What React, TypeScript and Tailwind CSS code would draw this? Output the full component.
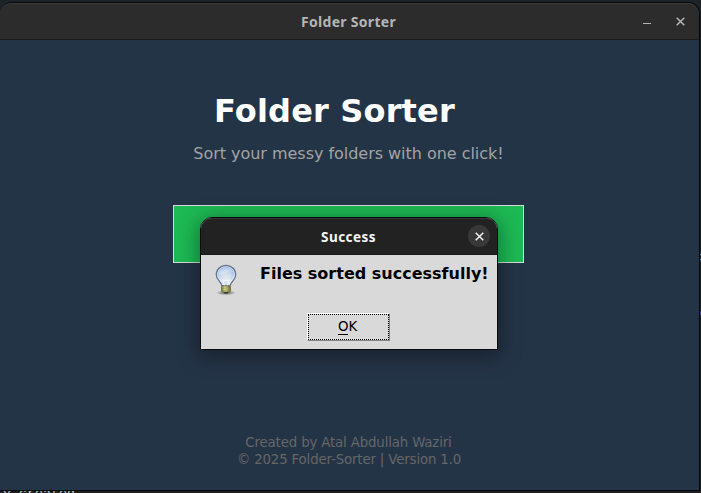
function Bulb() {
  return (
    <svg width="22" height="32" viewBox="0 0 22 32" className="block">
      <defs>
        <radialGradient id="glass" cx="50%" cy="65%" r="65%">
          <stop offset="0" stopColor="#e6ebef" />
          <stop offset="0.5" stopColor="#c8d9ec" />
          <stop offset="1" stopColor="#79a5e0" />
        </radialGradient>
        <linearGradient id="cap" x1="0" x2="1" y1="0" y2="0">
          <stop offset="0" stopColor="#7b7d2c" />
          <stop offset="0.4" stopColor="#eeefb4" />
          <stop offset="1" stopColor="#6b6d24" />
        </linearGradient>
        <radialGradient id="shade">
          <stop offset="0" stopColor="#333" stopOpacity="0.75" />
          <stop offset="1" stopColor="#333" stopOpacity="0" />
        </radialGradient>
      </defs>
      <ellipse cx="11" cy="28.8" rx="10" ry="2.6" fill="url(#shade)" />
      <path d="M7 22C6.500 18 1.300 16 1.300 10.700C1.300 5 5.600 1.500 11 1.500s9.700 3.500 9.700 9.200c0 5.300-5.200 7.300-5.700 11.300z" fill="url(#glass)" stroke="#6c7288" strokeWidth="1.300" />
      <path d="M8 21C7.500 17 2.600 15 2.600 10.700C2.600 6 6.500 2.800 11 2.800s8.400 3.200 8.400 7.900c0 4.300-4.900 6.300-5.400 10.300" fill="none" stroke="#edf4fc" strokeWidth="0.900" opacity="0.850" />
      <path d="M4 8C5 3.500 16 2 18 8C13 6 10 10 4 11z" fill="#fff" opacity="0.300" />
      <path d="M9.500 21.500L7.500 15.500l2.500 1.500 1-1.500 1 1.500 2.500-1.500-2 6" fill="none" stroke="#fafafa" strokeWidth="1" />
      <rect x="6.500" y="22" width="9" height="6" rx="1.300" fill="url(#cap)" stroke="#5e6028" strokeWidth="0.700" />
      <path d="M6.500 24.500l9-1M6.500 26.700l9-1" stroke="#7c7e3a" strokeWidth="0.700" />
      <path d="M8.500 28h5l-1 1.500h-3z" fill="#34352a" />
    </svg>
  );
}

function Cross() {
  return (
    <svg width="9" height="9" viewBox="0 0 9 9" className="block" fill="none" stroke="currentColor" strokeWidth="1.500">
      <path d="M0.700 0.700l7.600 7.600M8.300 0.700L0.700 8.300" />
    </svg>
  );
}

function Dialog() {
  return (
    <div className="absolute left-[200px] top-[217px] h-[133px] w-[298px] overflow-hidden rounded-t-[12px] border border-[#090c0f] bg-[#d9d9d9] shadow-[0_4px_20px_3px_rgba(0,0,0,0.36)]">
      <div className="relative flex h-[37px] items-center justify-center rounded-t-[11px] border-b border-[#171717] bg-[#222222] shadow-[inset_0_1px_0_#353535]">
        <span className="pt-[2px] pr-px font-['Noto_Sans',sans-serif] text-[13.500px] font-bold tracking-[0.450px] text-[#f5f5f5]">Success</span>
        <button className="absolute right-[7px] top-[7px] flex size-[22px] items-center rounded-full bg-[#383838] pl-[6.500px] text-[#f2f2f2]">
          <Cross />
        </button>
      </div>
      <div className="flex pl-[14px] pt-[9px]">
        <Bulb />
        <p className="ml-[23px] whitespace-nowrap text-[16px] leading-[19px] font-bold text-black">Files sorted successfully!</p>
      </div>
      <button className="ml-[106px] mt-[17px] flex h-[28px] w-[83px] border border-t-white border-r-[#828282] border-b-[#828282] border-l-white">
        <span className="flex h-full w-full items-center justify-center border border-dotted border-black pr-[2px] text-[13.330px] leading-[16px] tracking-[-0.200px] text-black">
          <span className="border-b border-black leading-[14px]">O</span>
          <span className="border-b border-transparent leading-[14px]">K</span>
        </span>
      </button>
    </div>
  );
}

export default function App() {
  return (
    <div className="relative h-[493px] w-[701px] overflow-hidden bg-[#1c2226] pt-[2px] font-['DejaVu_Sans',sans-serif]">
      <div className="flex h-[489px] w-[700px] flex-col overflow-hidden rounded-t-[12px] border-y border-r border-[#05080b] bg-[#243447]">
        <header className="relative flex h-[37px] shrink-0 items-center justify-center rounded-t-[11px] border-b border-[#1c1c1c] bg-[#2c2c2c] text-[#b5b5b5] shadow-[inset_0_1px_0_#3b3b3b]">
          <h2 className="pr-[2px] font-['Noto_Sans',sans-serif] text-[14px] font-bold tracking-[0.300px]">Folder Sorter</h2>
          <div className="absolute right-[14px] top-[14px] flex gap-[25px]">
            <span className="mt-[6px] h-px w-2 bg-[#b5b5b5]" />
            <Cross />
          </div>
        </header>
        <main className="flex flex-1 flex-col items-center">
          <h1 className="mr-[30px] mt-[52px] text-[32px] leading-[38px] font-bold tracking-[0.170px] text-white">Folder Sorter</h1>
          <p className="mt-[14px] mr-[2px] text-[16px] leading-[19px] tracking-[-0.030px] text-[#a3a3a3]">Sort your messy folders with one click!</p>
          <div className="mr-[2px] mt-[42px] h-[58px] w-[351px] border border-[#d9d9d9] bg-[#1db954]" />
          <footer className="mt-[171px] text-center text-[13.330px] leading-[17px] tracking-[-0.150px] text-[#666666]">
            <p className="mr-[2px]">Created by Atal Abdullah Waziri</p>
            <p className="mr-px">© 2025 Folder-Sorter | Version 1.0</p>
          </footer>
        </main>
      </div>
      <div className="flex h-[2px] items-end bg-[#1d1c22] pl-[3px]">
        <span className="h-[2px] overflow-hidden font-['Liberation_Mono',monospace] text-[13.330px] leading-[14px] text-[#c4c4c4]">
          <span className="-mt-[4px] block">v created</span>
        </span>
      </div>
      <Dialog />
      <div className="absolute right-0 top-[254px] h-[6px] w-px border-y border-[#4b9bd8]" />
      <div className="absolute right-0 top-[311px] h-[4px] w-px bg-[#343b8c]" />
    </div>
  );
}
